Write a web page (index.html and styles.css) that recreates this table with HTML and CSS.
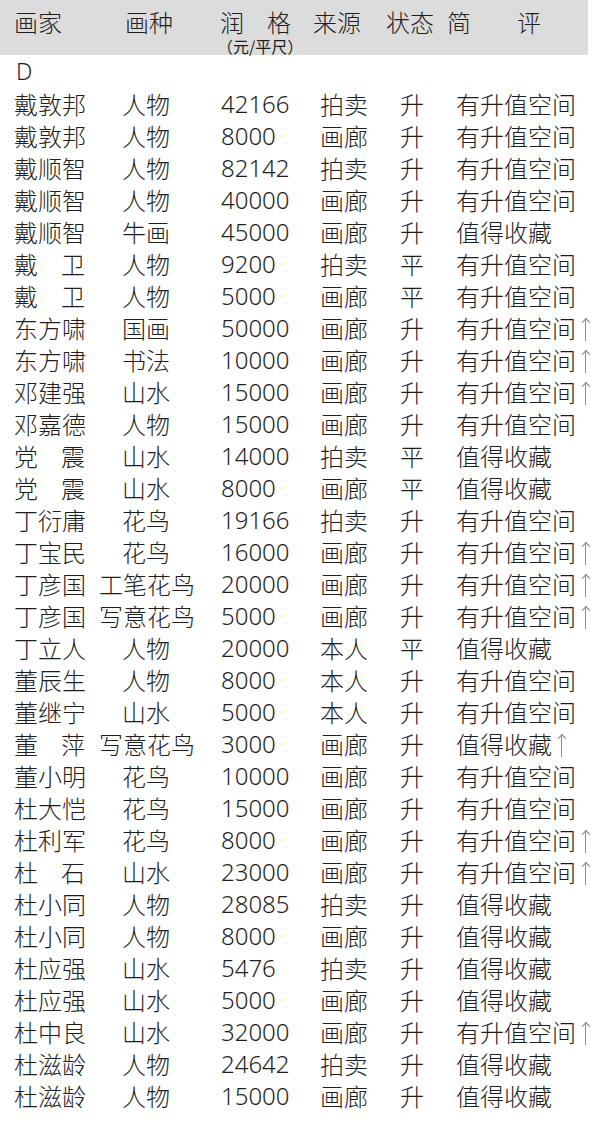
FILE: index.html
```html
<!DOCTYPE html>
<html lang="zh">
<head>
<meta charset="utf-8">
<title>画家润格</title>
<link rel="stylesheet" href="styles.css">
</head>
<body>
<div class="page">
  <div class="head">
    <span class="h-name">画家</span>
    <span class="h-genre">画种</span>
    <span class="h-price"><span class="h-price-top"><span>润</span><span>格</span></span><span class="h-unit">（元/平尺）</span></span>
    <span class="h-src">来源</span>
    <span class="h-state">状态</span>
    <span class="h-cmt"><span>简</span><span>评</span></span>
  </div>
  <div class="letter">D</div>
  <div class="rows">
    <div class="row"><span class="c-name">戴敦邦</span><span class="c-genre">人物</span><span class="c-price">42166</span><span class="c-src">拍卖</span><span class="c-state">升</span><span class="c-cmt">有升值空间</span></div>
    <div class="row"><span class="c-name">戴敦邦</span><span class="c-genre">人物</span><span class="c-price">8000</span><span class="c-src">画廊</span><span class="c-state">升</span><span class="c-cmt">有升值空间</span></div>
    <div class="row"><span class="c-name">戴顺智</span><span class="c-genre">人物</span><span class="c-price">82142</span><span class="c-src">拍卖</span><span class="c-state">升</span><span class="c-cmt">有升值空间</span></div>
    <div class="row"><span class="c-name">戴顺智</span><span class="c-genre">人物</span><span class="c-price">40000</span><span class="c-src">画廊</span><span class="c-state">升</span><span class="c-cmt">有升值空间</span></div>
    <div class="row"><span class="c-name">戴顺智</span><span class="c-genre">牛画</span><span class="c-price">45000</span><span class="c-src">画廊</span><span class="c-state">升</span><span class="c-cmt">值得收藏</span></div>
    <div class="row"><span class="c-name two"><span>戴</span><span>卫</span></span><span class="c-genre">人物</span><span class="c-price">9200</span><span class="c-src">拍卖</span><span class="c-state">平</span><span class="c-cmt">有升值空间</span></div>
    <div class="row"><span class="c-name two"><span>戴</span><span>卫</span></span><span class="c-genre">人物</span><span class="c-price">5000</span><span class="c-src">画廊</span><span class="c-state">平</span><span class="c-cmt">有升值空间</span></div>
    <div class="row"><span class="c-name">东方啸</span><span class="c-genre">国画</span><span class="c-price">50000</span><span class="c-src">画廊</span><span class="c-state">升</span><span class="c-cmt">有升值空间<i class="up"></i></span></div>
    <div class="row"><span class="c-name">东方啸</span><span class="c-genre">书法</span><span class="c-price">10000</span><span class="c-src">画廊</span><span class="c-state">升</span><span class="c-cmt">有升值空间<i class="up"></i></span></div>
    <div class="row"><span class="c-name">邓建强</span><span class="c-genre">山水</span><span class="c-price">15000</span><span class="c-src">画廊</span><span class="c-state">升</span><span class="c-cmt">有升值空间<i class="up"></i></span></div>
    <div class="row"><span class="c-name">邓嘉德</span><span class="c-genre">人物</span><span class="c-price">15000</span><span class="c-src">画廊</span><span class="c-state">升</span><span class="c-cmt">有升值空间</span></div>
    <div class="row"><span class="c-name two"><span>党</span><span>震</span></span><span class="c-genre">山水</span><span class="c-price">14000</span><span class="c-src">拍卖</span><span class="c-state">平</span><span class="c-cmt">值得收藏</span></div>
    <div class="row"><span class="c-name two"><span>党</span><span>震</span></span><span class="c-genre">山水</span><span class="c-price">8000</span><span class="c-src">画廊</span><span class="c-state">平</span><span class="c-cmt">值得收藏</span></div>
    <div class="row"><span class="c-name">丁衍庸</span><span class="c-genre">花鸟</span><span class="c-price">19166</span><span class="c-src">拍卖</span><span class="c-state">升</span><span class="c-cmt">有升值空间</span></div>
    <div class="row"><span class="c-name">丁宝民</span><span class="c-genre">花鸟</span><span class="c-price">16000</span><span class="c-src">画廊</span><span class="c-state">升</span><span class="c-cmt">有升值空间<i class="up"></i></span></div>
    <div class="row"><span class="c-name">丁彦国</span><span class="c-genre">工笔花鸟</span><span class="c-price">20000</span><span class="c-src">画廊</span><span class="c-state">升</span><span class="c-cmt">有升值空间<i class="up"></i></span></div>
    <div class="row"><span class="c-name">丁彦国</span><span class="c-genre">写意花鸟</span><span class="c-price">5000</span><span class="c-src">画廊</span><span class="c-state">升</span><span class="c-cmt">有升值空间<i class="up"></i></span></div>
    <div class="row"><span class="c-name">丁立人</span><span class="c-genre">人物</span><span class="c-price">20000</span><span class="c-src">本人</span><span class="c-state">平</span><span class="c-cmt">值得收藏</span></div>
    <div class="row"><span class="c-name">董辰生</span><span class="c-genre">人物</span><span class="c-price">8000</span><span class="c-src">本人</span><span class="c-state">升</span><span class="c-cmt">有升值空间</span></div>
    <div class="row"><span class="c-name">董继宁</span><span class="c-genre">山水</span><span class="c-price">5000</span><span class="c-src">本人</span><span class="c-state">升</span><span class="c-cmt">有升值空间</span></div>
    <div class="row"><span class="c-name two"><span>董</span><span>萍</span></span><span class="c-genre">写意花鸟</span><span class="c-price">3000</span><span class="c-src">画廊</span><span class="c-state">升</span><span class="c-cmt">值得收藏<i class="up"></i></span></div>
    <div class="row"><span class="c-name">董小明</span><span class="c-genre">花鸟</span><span class="c-price">10000</span><span class="c-src">画廊</span><span class="c-state">升</span><span class="c-cmt">有升值空间</span></div>
    <div class="row"><span class="c-name">杜大恺</span><span class="c-genre">花鸟</span><span class="c-price">15000</span><span class="c-src">画廊</span><span class="c-state">升</span><span class="c-cmt">有升值空间</span></div>
    <div class="row"><span class="c-name">杜利军</span><span class="c-genre">花鸟</span><span class="c-price">8000</span><span class="c-src">画廊</span><span class="c-state">升</span><span class="c-cmt">有升值空间<i class="up"></i></span></div>
    <div class="row"><span class="c-name two"><span>杜</span><span>石</span></span><span class="c-genre">山水</span><span class="c-price">23000</span><span class="c-src">画廊</span><span class="c-state">升</span><span class="c-cmt">有升值空间<i class="up"></i></span></div>
    <div class="row"><span class="c-name">杜小同</span><span class="c-genre">人物</span><span class="c-price">28085</span><span class="c-src">拍卖</span><span class="c-state">升</span><span class="c-cmt">值得收藏</span></div>
    <div class="row"><span class="c-name">杜小同</span><span class="c-genre">人物</span><span class="c-price">8000</span><span class="c-src">画廊</span><span class="c-state">升</span><span class="c-cmt">值得收藏</span></div>
    <div class="row"><span class="c-name">杜应强</span><span class="c-genre">山水</span><span class="c-price">5476</span><span class="c-src">拍卖</span><span class="c-state">升</span><span class="c-cmt">值得收藏</span></div>
    <div class="row"><span class="c-name">杜应强</span><span class="c-genre">山水</span><span class="c-price">5000</span><span class="c-src">画廊</span><span class="c-state">升</span><span class="c-cmt">值得收藏</span></div>
    <div class="row"><span class="c-name">杜中良</span><span class="c-genre">山水</span><span class="c-price">32000</span><span class="c-src">画廊</span><span class="c-state">升</span><span class="c-cmt">有升值空间<i class="up"></i></span></div>
    <div class="row"><span class="c-name">杜滋龄</span><span class="c-genre">人物</span><span class="c-price">24642</span><span class="c-src">拍卖</span><span class="c-state">升</span><span class="c-cmt">值得收藏</span></div>
    <div class="row"><span class="c-name">杜滋龄</span><span class="c-genre">人物</span><span class="c-price">15000</span><span class="c-src">画廊</span><span class="c-state">升</span><span class="c-cmt">值得收藏</span></div>
  </div>
</div>
</body>
</html>
```

FILE: styles.css
```css
html, body {
  margin: 0;
  padding: 0;
  background: #ffffff;
}
body {
  font-family: "Noto Sans CJK SC", "Noto Sans", sans-serif;
  font-weight: 300;
  color: #1e1e1e;
  font-size: 24px;
}
.page {
  width: 600px;
  height: 1124px;
  overflow: hidden;
}
.head {
  width: 588px;
  height: 55px;
  background: #dcdcdc;
  display: grid;
  grid-template-columns: 14px 111px 95px 93px 73px 61px 1fr;
  align-items: start;
  box-sizing: border-box;
}
.head > span {
  line-height: 24px;
  padding-top: 10px;
}
.h-name { grid-column: 2; }
.h-genre { grid-column: 3; }
.h-price {
  grid-column: 4;
  display: flex;
  flex-direction: column;
}
.h-price-top {
  display: flex;
  justify-content: space-between;
  width: 71px;
}
.h-unit {
  font-size: 16px;
  font-weight: 400;
  line-height: 16px;
  margin-top: 4px;
  margin-left: -3px;
  white-space: nowrap;
}
.h-src { grid-column: 5; }
.h-state { grid-column: 6; }
.h-cmt {
  grid-column: 7;
  display: flex;
  gap: 46px;
}
.letter {
  height: 33px;
  line-height: 33px;
  padding-left: 16px;
  font-family: "Noto Sans", sans-serif;
  font-weight: 300;
  font-size: 23px;
}
.row {
  display: grid;
  grid-template-columns: 14px 85px 96px 125px 80px 56px 1fr;
  height: 32px;
  line-height: 32px;
  white-space: nowrap;
}
.c-name { grid-column: 2; }
.c-name.two {
  display: flex;
  justify-content: space-between;
  width: 71px;
}
.c-genre {
  grid-column: 3;
  text-align: center;
  padding-right: 2px;
}
.c-price {
  grid-column: 4;
  padding-left: 26px;
  font-family: "Noto Sans", sans-serif;
  font-weight: 300;
}
.c-src { grid-column: 5; }
.c-state { grid-column: 6; }
.c-cmt {
  grid-column: 7;
  display: flex;
  align-items: center;
}
.up {
  display: inline-block;
  position: relative;
  width: 9px;
  height: 24px;
  margin-left: 5px;
  margin-top: 2px;
}
.up::before {
  content: "";
  position: absolute;
  left: 4px;
  top: 1px;
  width: 1.2px;
  height: 23px;
  background: #8a8a8a;
}
.up::after {
  content: "";
  position: absolute;
  top: 1px;
  left: 4.6px;
  width: 5px;
  height: 5px;
  border-left: 1.2px solid #8a8a8a;
  border-top: 1.2px solid #8a8a8a;
  transform: rotate(45deg);
  transform-origin: 0 0;
}
```
